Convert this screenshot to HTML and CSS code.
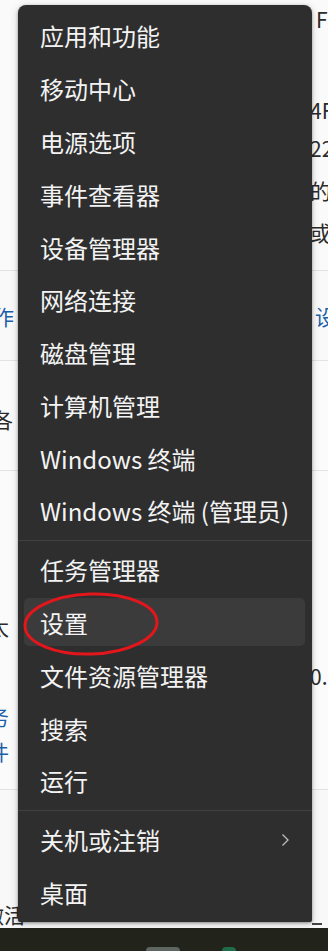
FILE: index.html
```html
<!DOCTYPE html>
<html lang="zh-CN">
<head>
<meta charset="utf-8">
<title>Win+X 菜单</title>
<link rel="stylesheet" href="styles.css">
</head>
<body>
<div class="bg">
  <section class="bg-top">
    <div class="rtxt t1">F</div>
    <div class="rtxt t2">4F</div>
    <div class="rtxt t3">22</div>
    <div class="rtxt t4">的</div>
    <div class="rtxt t5">或</div>
  </section>
  <section class="bg-row row1">
    <span class="ltxt link">作</span>
    <span class="rtxt link">设</span>
  </section>
  <section class="bg-row row2">
    <span class="ltxt">各</span>
  </section>
  <section class="bg-row row3">
    <div class="ltxt m1">太</div>
    <div class="rtxt m2">0.</div>
    <div class="ltxt link m3">务</div>
    <div class="ltxt link m4">件</div>
  </section>
  <section class="bg-row row4">
    <span class="ltxt act">激活</span>
    <span class="rmark"></span>
  </section>
  <footer class="taskbar">
    <span class="tb-icon grey"></span>
    <span class="tb-icon green"></span>
  </footer>
</div>

<nav class="menu">
  <ul class="group">
    <li class="item">应用和功能</li>
    <li class="item">移动中心</li>
    <li class="item">电源选项</li>
    <li class="item">事件查看器</li>
    <li class="item">设备管理器</li>
    <li class="item">网络连接</li>
    <li class="item">磁盘管理</li>
    <li class="item">计算机管理</li>
    <li class="item">Windows 终端</li>
    <li class="item">Windows 终端 (管理员)</li>
  </ul>
  <div class="sep"></div>
  <ul class="group">
    <li class="item">任务管理器</li>
    <li class="item hover">设置</li>
    <li class="item">文件资源管理器</li>
    <li class="item">搜索</li>
    <li class="item">运行</li>
  </ul>
  <div class="sep"></div>
  <ul class="group">
    <li class="item sub">关机或注销
      <svg class="chev" width="9" height="14" viewBox="0 0 9 14"><path d="M1.5 1.5 L7 7 L1.5 12.5" fill="none" stroke="#bdbdbd" stroke-width="1.3"/></svg>
    </li>
    <li class="item">桌面</li>
  </ul>
</nav>

<svg class="circle" width="150" height="72" viewBox="0 0 150 72">
  <ellipse cx="74" cy="36" rx="66" ry="30" fill="none" stroke="#e3161c" stroke-width="3" transform="rotate(-2 74 36)"/>
</svg>
</body>
</html>
```

FILE: styles.css
```css
html, body {
  margin: 0;
  padding: 0;
}
body {
  width: 328px;
  height: 951px;
  overflow: hidden;
  position: relative;
  background: #f7f7f7;
  font-family: "Noto Sans CJK SC", "Noto Sans", sans-serif;
}

/* background window */
.bg {
  display: flex;
  flex-direction: column;
  height: 951px;
  color: #2b2b2b;
  font-size: 21px;
}
.bg-top {
  height: 270px;
  display: flex;
  flex-direction: column;
  background: #fafafa;
}
.rtxt {
  margin-left: 310px;
  line-height: 24px;
  white-space: nowrap;
}
.ltxt {
  line-height: 24px;
  white-space: nowrap;
}
.t1 { margin-top: 7px; margin-left: 316px; }
.t2 { margin-top: 67px; }
.t3 { margin-top: 14px; }
.t4 { margin-top: 18px; }
.t5 { margin-top: 18px; }

.bg-row {
  border-top: 1px solid #e3e3e3;
  display: flex;
  position: relative;
}
.row1 {
  height: 89px;
  align-items: center;
  justify-content: space-between;
  background: #f9f9f9;
}
.row1 .ltxt { margin-left: -7px; }
.row1 .rtxt { margin-left: 0; margin-right: -8px; }
.link { color: #1a5fa8; }
.row2 {
  height: 109px;
  align-items: center;
  background: #fbfbfb;
}
.row2 .ltxt { margin-left: -8px; margin-top: 6px; }
.row3 {
  height: 318px;
  flex-direction: column;
  background: #fbfbfb;
}
.row3 .ltxt { margin-left: -12px; }
.m1 { margin-top: 143px; }
.m2 { margin-top: 26px; margin-left: 310px; }
.m3 { margin-top: 16px; }
.m4 { margin-top: 11px; }
.row4 {
  flex: 1;
  align-items: flex-end;
  justify-content: space-between;
  background: #f8f8f8;
}
.act { margin-left: -17px; margin-bottom: 2px; }
.rmark {
  width: 10px;
  height: 2px;
  background: #444;
  margin-right: 6px;
  margin-bottom: 3px;
}
.taskbar {
  height: 23px;
  background: #22231b;
  display: flex;
  align-items: flex-end;
  gap: 42px;
  padding-left: 146px;
}
.tb-icon {
  width: 34px;
  height: 4px;
  border-radius: 4px 4px 0 0;
}
.tb-icon.grey { background: #5d6660; }
.tb-icon.green { width: 14px; background: #1f6b4a; }

/* Win+X menu */
.menu {
  position: absolute;
  left: 18px;
  top: 5px;
  width: 294px;
  box-sizing: border-box;
  padding: 4.5px 0 3px;
  background: #2e2e2e;
  border-radius: 8px 8px 2px 2px;
  box-shadow: 0 1px 3px rgba(0,0,0,0.35), 0 2px 8px rgba(0,0,0,0.18);
}
.group {
  list-style: none;
  margin: 0;
  padding: 0;
  display: flex;
  flex-direction: column;
}
.item {
  height: 48px;
  margin: 2.4px 7px 2.4px 6px;
  padding-left: 16px;
  display: flex;
  align-items: center;
  color: #f3f3f3;
  font-size: 24px;
  border-radius: 5px;
  white-space: nowrap;
}
.item.hover {
  background: #3b3b3b;
}
.item.sub {
  justify-content: space-between;
  padding-right: 15px;
}
.chev { display: block; }
.sep {
  height: 1px;
  background: #414141;
  margin: 2.5px 0 2.5px;
}

/* annotation */
.circle {
  position: absolute;
  left: 17px;
  top: 588px;
}
```
